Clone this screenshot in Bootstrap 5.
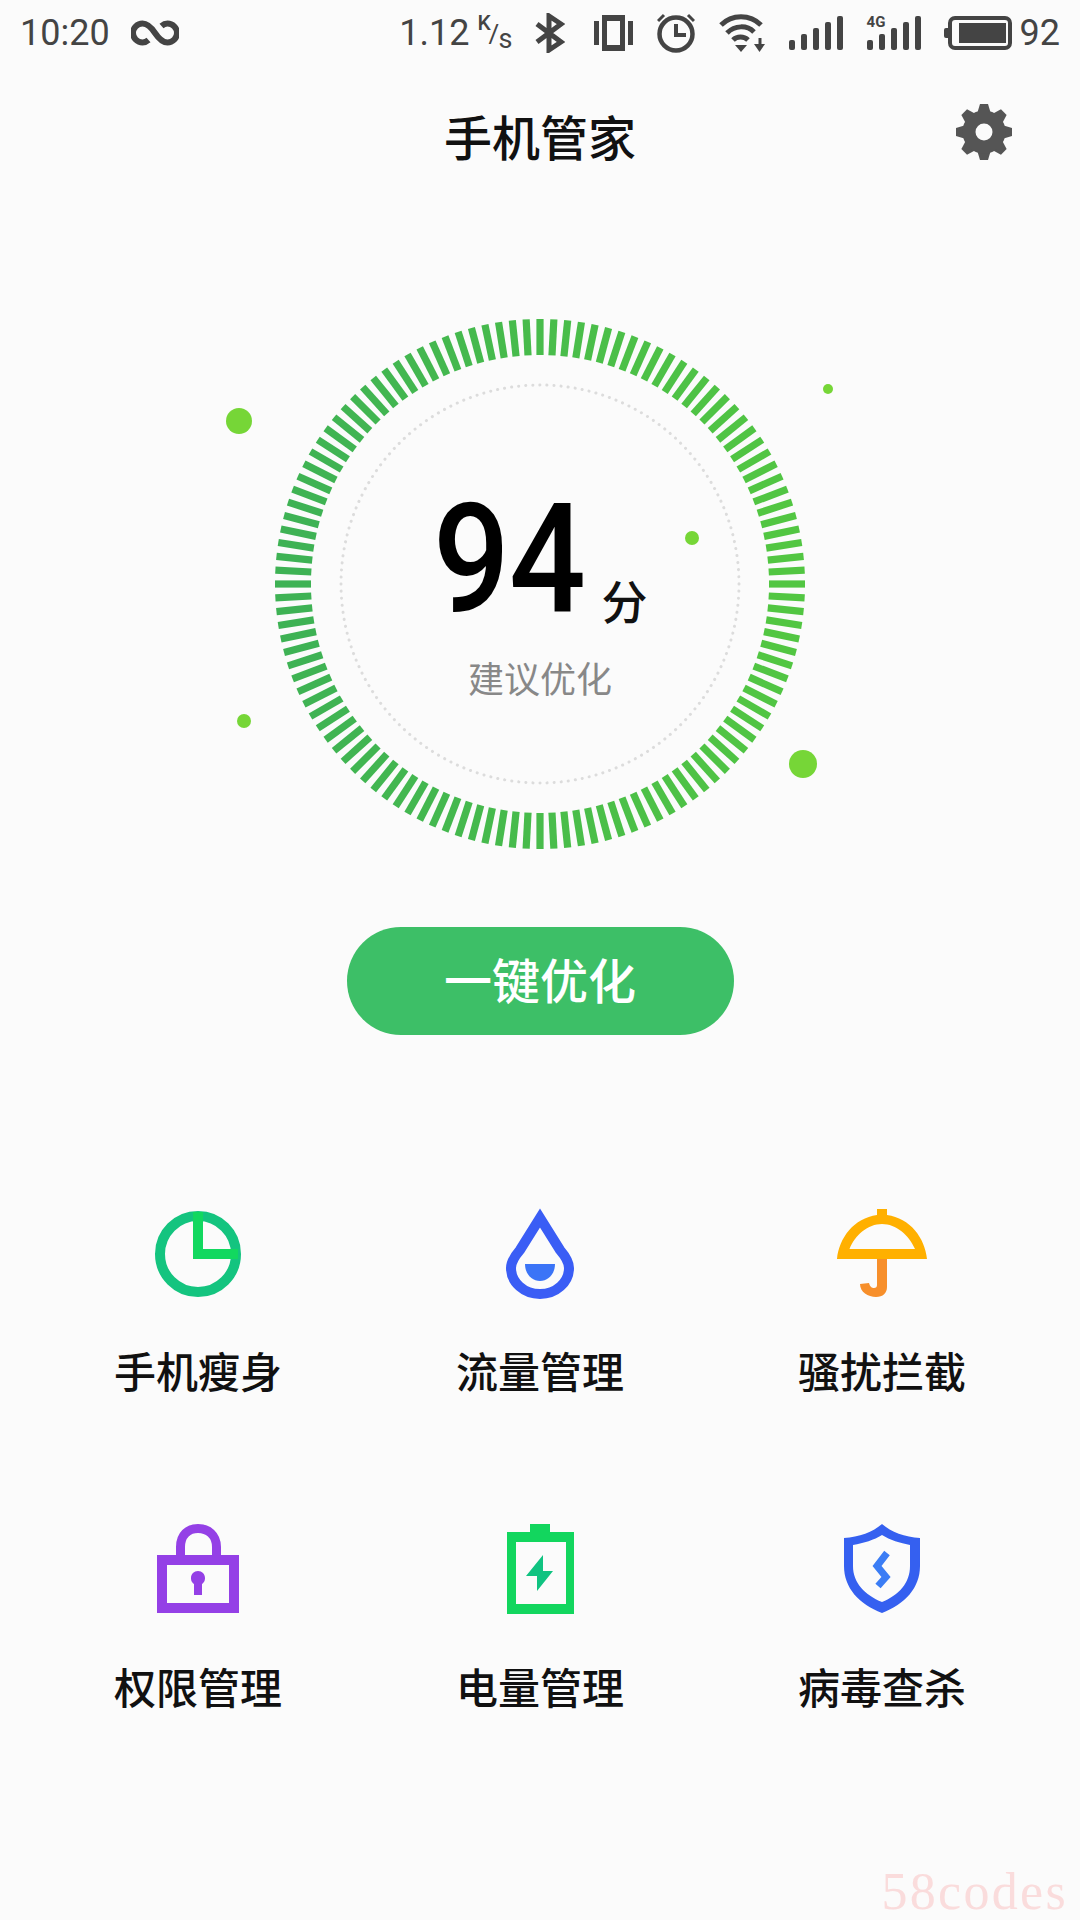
<!DOCTYPE html>
<html lang="zh-CN">
<head>
    <meta charset="UTF-8">
    <meta name="viewport" content="width=device-width, initial-scale=1.0">
    <title>手机管家</title>
    <link rel="stylesheet" href="https://cdn.jsdelivr.net/npm/bootstrap@5.3.3/dist/css/bootstrap.min.css">
    <style>
        body {
            background: #fbfbfb;
            width: 1080px;
            height: 1920px;
            overflow: hidden;
            font-family: "Noto Sans CJK SC", "Liberation Sans", sans-serif;
        }
        .status-bar {
            height: 66px;
            padding: 0 20px 0 20px;
            color: #444;
            font-family: Roboto, sans-serif;
            font-size: 36px;
        }
        .status-bar svg { display: block; flex: none; }
        .status-right { gap: 24px; }
        .loop-icon { margin-left: 21px; }
        .net-speed { margin-right: -16px; }
        .speed-unit { font-size: 21px; width: 33px; height: 40px; line-height: 1; }
        .speed-unit span { position: absolute; }
        .unit-k { left: 0; top: 0; font-weight: 500; }
        .unit-slash { left: 11px; top: 8px; font-size: 26px; }
        .unit-s { left: 21px; top: 13px; font-size: 27px; }
        .bt-icon { margin-right: 5px; }
        .net-4g { font-size: 15px; font-weight: 700; top: -1px; left: 0; line-height: 1; }
        .cell-battery { margin-left: -1px; }
        .battery-level { margin-left: -16px; }
        .title-bar { height: 144px; padding: 0 67px; }
        .title-side { flex: 1 1 0; }
        .page-title { font-size: 48px; font-weight: 500; color: #111; line-height: 1; margin-bottom: 7px; }
        .gear-icon { margin-bottom: 12px; margin-right: -1px; }
        .score-area { height: 640px; margin-top: 54px; }
        .score-canvas { left: 220px; top: 0; }
        .score-text { top: 0; left: 0; width: 100%; height: 100%; }
        .score-num {
            display: inline-block;
            width: 154px;
            font-family: Roboto, sans-serif;
            font-size: 152px;
            font-weight: 500;
            color: #000;
            line-height: 1;
            letter-spacing: -1px;
            transform: scaleX(0.89);
            transform-origin: left center;
        }
        .score-unit { font-size: 46px; font-weight: 500; color: #111; margin-left: 15px; line-height: 1; position: relative; top: 8px; }
        .score-hint { font-size: 36px; color: #888; line-height: 1; margin-top: 24px; }
        .score-inner { padding-top: 10px; }
        .optimize-btn {
            width: 387px;
            height: 108px;
            margin-top: 23px;
            padding-bottom: 12px;
            background: #3dbf67;
            border: 0;
            color: #fff;
            font-size: 48px;
            font-weight: 500;
            line-height: 1;
        }
        .tools { margin-top: 171px; padding: 0 27px; }
        .tool-item { height: 316px; }
        .tool-item svg { display: block; margin: 0 auto; }
        .tool-name { font-size: 42px; font-weight: 500; color: #111; line-height: 60px; margin-top: 38px; }
        .stamp {
            right: 12px;
            bottom: 2px;
            font-family: "Liberation Serif", serif;
            font-size: 52px;
            letter-spacing: 2.300px;
            color: #fadcdc;
            line-height: 1;
        }
    </style>
</head>
<body class="position-relative">
    <div class="status-bar d-flex align-items-center justify-content-between">
        <div class="d-flex align-items-center">
            <span>10:20</span>
            <svg class="loop-icon" width="48" height="26" viewBox="0 0 48 26" fill="none" stroke="#444" stroke-width="6">
                <path d="M24 13C20 7 16 3.500 11.500 3.500A9.500 9.500 0 0 0 11.500 22.500C13.500 22.500 15.500 21.800 17.500 20M24 13C28 19 32 22.500 36.500 22.500A9.500 9.500 0 0 0 36.500 3.500C34.500 3.500 32.500 4.200 30.500 6"/>
            </svg>
        </div>
        <div class="status-right d-flex align-items-center">
            <span class="net-speed">1.12</span>
            <div class="speed-unit position-relative">
                <span class="unit-k">K</span><span class="unit-slash">/</span><span class="unit-s">s</span>
            </div>
            <svg class="bt-icon" width="30" height="40" viewBox="0 0 30 40" fill="none" stroke="#444" stroke-width="5">
                <path d="M2 11L26 29L14 37V3L26 11L2 29"/>
            </svg>
            <svg width="39" height="36" viewBox="0 0 39 36" fill="#444">
                <rect x="0" y="6" width="5" height="24"/>
                <rect x="34" y="6" width="5" height="24"/>
                <path fill-rule="evenodd" d="M8 0H31V36H8ZM13 6V30H26V6Z"/>
            </svg>
            <svg width="38" height="40" viewBox="0 0 38 40" fill="none" stroke="#444">
                <circle cx="19" cy="21" r="16.500" stroke-width="4.500"/>
                <path d="M19 11V22H29" stroke-width="4"/>
                <path d="M1 8L7 2M37 8L31 2" stroke-width="3"/>
            </svg>
            <svg width="46" height="38" viewBox="0 0 46 38" fill="none" stroke="#444" stroke-width="5">
                <path d="M2 11C13 0 31 0 42 11M8 19C16 11 28 11 35 18M14 26C18 22 25 22 29 26"/>
                <path d="M16 31L22 38L28 31Z" fill="#444" stroke="none"/>
                <path d="M41 24V33" stroke-width="3"/>
                <path d="M35 30H46L40.500 38Z" fill="#444" stroke="none"/>
            </svg>
            <svg width="54" height="34" viewBox="0 0 54 34" fill="#444">
                <rect x="0" y="24" width="6" height="10" rx="2"/>
                <rect x="12" y="18" width="6" height="16" rx="2"/>
                <rect x="24" y="12" width="6" height="22" rx="2"/>
                <rect x="36" y="6" width="6" height="28" rx="2"/>
                <rect x="48" y="0" width="6" height="34" rx="2"/>
            </svg>
            <div class="position-relative">
                <span class="net-4g position-absolute">4G</span>
                <svg width="54" height="34" viewBox="0 0 54 34" fill="#444">
                    <rect x="0" y="24" width="6" height="10" rx="2"/>
                    <rect x="12" y="18" width="6" height="16" rx="2"/>
                    <rect x="24" y="12" width="6" height="22" rx="2"/>
                    <rect x="36" y="6" width="6" height="28" rx="2"/>
                    <rect x="48" y="0" width="6" height="34" rx="2"/>
                </svg>
            </div>
            <svg class="cell-battery" width="68" height="34" viewBox="0 0 68 34">
                <rect x="0" y="12" width="6" height="10" rx="2" fill="#444"/>
                <rect x="6" y="2" width="60" height="30" rx="5" fill="none" stroke="#444" stroke-width="4"/>
                <rect x="15" y="7" width="47" height="20" fill="#444"/>
            </svg>
            <span class="battery-level">92</span>
        </div>
    </div>

    <div class="title-bar d-flex align-items-center">
        <div class="title-side"></div>
        <div class="page-title">手机管家</div>
        <div class="title-side d-flex justify-content-end">
            <svg class="gear-icon" width="60" height="60" viewBox="-30 -30 60 60">
                <g id="gear-teeth" fill="#555"></g>
                <circle r="15" fill="none" stroke="#555" stroke-width="13"/>
            </svg>
        </div>
    </div>

    <div class="score-area position-relative">
        <svg class="score-canvas position-absolute" width="640" height="640" viewBox="-320 -320 640 640">
            <g id="ring-ticks"></g>
            <circle r="199" fill="none" stroke="#dcdcdc" stroke-width="3" stroke-linecap="round" stroke-dasharray="0.100 7"/>
            <circle cx="-301" cy="-163" r="13" fill="#76d637"/>
            <circle cx="288" cy="-195" r="5" fill="#76d637"/>
            <circle cx="152" cy="-46" r="7" fill="#76d637"/>
            <circle cx="-296" cy="137" r="7" fill="#76d637"/>
            <circle cx="263" cy="180" r="14" fill="#76d637"/>
        </svg>
        <div class="score-text position-absolute d-flex flex-column align-items-center justify-content-center">
            <div class="score-inner d-flex flex-column align-items-center">
                <div class="d-flex align-items-baseline">
                    <span class="score-num">94</span><span class="score-unit">分</span>
                </div>
                <div class="score-hint">建议优化</div>
            </div>
        </div>
    </div>

    <div class="text-center">
        <button type="button" class="btn optimize-btn rounded-pill">一键优化</button>
    </div>

    <div class="tools row g-0 text-center">
        <div class="tool-item col-4">
            <svg width="96" height="96" viewBox="150 1206 96 96">
                <circle cx="198" cy="1254" r="38" fill="none" stroke="#14c47f" stroke-width="10"/>
                <path d="M193 1212H203V1249H238V1259H193Z" fill="#12d85f"/>
            </svg>
            <div class="tool-name">手机瘦身</div>
        </div>
        <div class="tool-item col-4">
            <svg width="96" height="96" viewBox="492 1206 96 96">
                <path d="M540 1218L560 1250C566 1257 569 1262 569 1268A29 26 0 0 1 511 1268C511 1262 514 1257 520 1250Z" fill="none" stroke="#3a5df5" stroke-width="10" stroke-miterlimit="10"/>
                <path d="M525 1264H555C555 1274 548 1281 540 1281C532 1281 525 1274 525 1264Z" fill="#3b74f7"/>
            </svg>
            <div class="tool-name">流量管理</div>
        </div>
        <div class="tool-item col-4">
            <svg width="96" height="96" viewBox="834 1206 96 96">
                <path d="M877 1259H887V1287C887 1293 883 1297 876 1297C868 1297 860 1292 860 1284L869 1283C870 1287 872 1288 874 1288C876 1288 877 1287 877 1285Z" fill="#f78f2b"/>
                <path fill-rule="evenodd" d="M877 1209H887V1215C910 1218 925 1238 927 1259H837C839 1238 854 1218 877 1215ZM882 1224C868 1224 855 1235 849.500 1249H915C909 1235 896 1224 882 1224Z" fill="#ffb000"/>
            </svg>
            <div class="tool-name">骚扰拦截</div>
        </div>
        <div class="tool-item col-4">
            <svg width="96" height="96" viewBox="150 1522 96 96">
                <path d="M180.500 1558V1547C180.500 1535 188 1528.500 198 1528.500C208 1528.500 216.500 1535 216.500 1547V1558" fill="none" stroke="#9440e6" stroke-width="9"/>
                <path fill-rule="evenodd" d="M157 1555H239V1613H157ZM167 1565V1603H229V1565Z" fill="#9440e6"/>
                <path d="M194 1595V1584C191 1582 191 1579 191 1578C191 1574 194 1571 198 1571C202 1571 205 1574 205 1578C205 1579 205 1582 202 1584V1595Z" fill="#9440e6"/>
            </svg>
            <div class="tool-name">权限管理</div>
        </div>
        <div class="tool-item col-4">
            <svg width="96" height="96" viewBox="492 1522 96 96">
                <path fill-rule="evenodd" d="M530 1524H550V1532H574V1614H507V1532H530ZM516 1542V1604H566V1542Z" fill="#12d65e"/>
                <path d="M543 1555L526 1576H537V1591L553 1571H543Z" fill="#10c381"/>
            </svg>
            <div class="tool-name">电量管理</div>
        </div>
        <div class="tool-item col-4">
            <svg width="96" height="96" viewBox="834 1522 96 96">
                <path fill-rule="evenodd" d="M882 1524C891 1532 905 1537 920 1538V1566C920 1588 905 1604 882 1613C859 1604 844 1588 844 1566V1538C859 1537 873 1532 882 1524ZM882 1535C874 1540 864 1543 853 1545V1566C853 1583 865 1595 882 1602C899 1595 910 1583 910 1566V1545C900 1543 890 1540 882 1535Z" fill="#3560f0"/>
                <path d="M887 1553L877 1566L886 1577L878 1586" fill="none" stroke="#3b7df5" stroke-width="7"/>
            </svg>
            <div class="tool-name">病毒查杀</div>
        </div>
    </div>

    <div class="stamp position-absolute">58codes</div>

    <script>
        document.addEventListener("DOMContentLoaded", function() {
            const ticks = document.getElementById("ring-ticks");
            let ringHtml = "";
            for (let i = 0; i < 120; i++) {
                // лево темнее, право светлее
                const t = (Math.sin(i * 3 * Math.PI / 180) + 1) / 2;
                const color = `rgb(${62 + 20 * t},${178 + 20 * t},${84 - 18 * t})`;
                ringHtml += `<rect x="-3.600" y="-265" width="7.200" height="36" fill="${color}" transform="rotate(${i * 3})"/>`;
            }
            ticks.innerHTML = ringHtml;

            const teeth = document.getElementById("gear-teeth");
            let teethHtml = "";
            for (let i = 0; i < 8; i++) {
                teethHtml += `<path d="M-7 -18L-4 -28H4L7 -18Z" transform="rotate(${i * 45})"/>`;
            }
            teeth.innerHTML = teethHtml;
        });
    </script>
    <script src="https://cdn.jsdelivr.net/npm/bootstrap@5.3.3/dist/js/bootstrap.bundle.min.js"></script>
</body>
</html>
